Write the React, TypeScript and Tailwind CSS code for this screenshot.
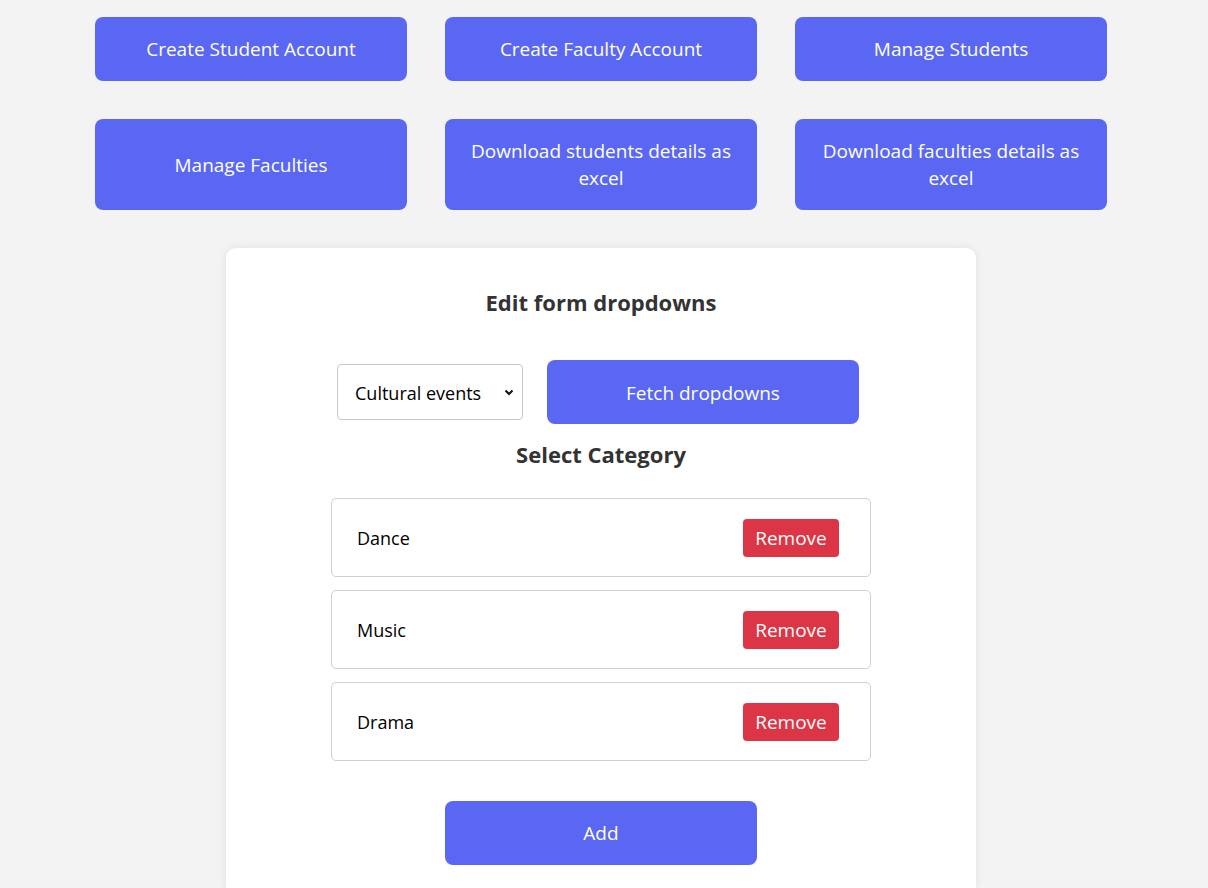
import { useState } from 'react';

const actions = [
  'Create Student Account',
  'Create Faculty Account',
  'Manage Students',
  'Manage Faculties',
  'Download students details as excel',
  'Download faculties details as excel'
];

export default function App() {
  const [category, setCategory] = useState('Cultural events');
  const [items, setItems] = useState(['Dance', 'Music', 'Drama']);

  return (
    <div
      className="min-h-screen bg-[#f3f3f3] pl-[95px] pt-[17px] text-[18px] text-[#222]"
      style={{ fontFamily: '"Open Sans", "Noto Sans", sans-serif' }}
    >
      <div className="grid w-[1012px] grid-cols-[312px_312px_312px] gap-x-[38px] gap-y-[38px]">
        {actions.map((label) => (
          <button
            key={label}
            className="flex min-h-[64px] items-center justify-center rounded-[8px] bg-[#5a67f2] px-6 pb-[18px] pt-[19px] text-center text-[19px] leading-[27px] text-white"
          >
            {label}
          </button>
        ))}
      </div>

      <div className="ml-[131px] mt-[38px] w-[750px] rounded-t-[10px] bg-white pb-6 pt-[39px] shadow-[0_0_10px_rgba(0,0,0,0.08)]">
        <h2 className="text-center text-[22px] font-bold leading-[30px] text-[#333]">Edit form dropdowns</h2>

        <div className="mt-[43px] flex items-center justify-center gap-[24px] pr-[6px]">
          <div className="relative">
            <select
              value={category}
              onChange={(e) => setCategory(e.target.value)}
              className="h-[56px] w-[186px] appearance-none rounded-[4px] border border-[#c8c8c8] bg-white pl-[17px] pr-8 pt-[2px] text-[18px] text-black"
            >
              <option>Cultural events</option>
              <option>Sports events</option>
              <option>Technical events</option>
            </select>
            <svg
              className="pointer-events-none absolute right-[8px] top-1/2 h-[12px] w-[12px] -translate-y-1/2"
              viewBox="0 0 12 12"
              fill="none"
              stroke="#111"
              strokeWidth="2"
            >
              <path d="M2.5 4.5 6 8l3.5-3.5" />
            </svg>
          </div>
          <button className="h-[64px] w-[312px] rounded-[8px] bg-[#5a67f2] pt-[2px] text-[19px] text-white">Fetch dropdowns</button>
        </div>

        <h3 className="mt-[15px] text-center text-[22px] font-bold leading-[30px] text-[#333]">Select Category</h3>

        <div className="mx-auto mt-[29px] flex w-[540px] flex-col gap-[13px]">
          {items.map((item) => (
            <div
              key={item}
              className="flex h-[79px] items-center justify-between rounded-[5px] border border-[#cfcfcf] pl-[25px] pr-[31px]"
            >
              <span className="pt-[2px] text-black">{item}</span>
              <button
                onClick={() => setItems(items.filter((i) => i !== item))}
                className="h-[38px] w-[96px] rounded-[4px] bg-[#dc3545] pt-[2px] text-[19px] text-white"
              >
                Remove
              </button>
            </div>
          ))}
        </div>

        <div className="mt-[40px] flex justify-center">
          <button className="h-[64px] w-[312px] rounded-[8px] bg-[#5a67f2] text-[19px] text-white">Add</button>
        </div>
      </div>
    </div>
  );
}
